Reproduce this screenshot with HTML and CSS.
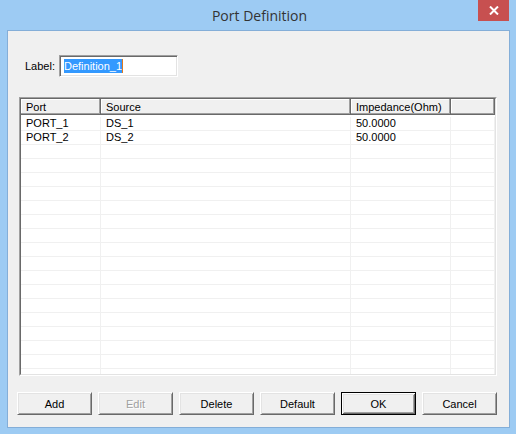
FILE: index.html
```html
<!DOCTYPE html>
<html lang="en">
<head>
  <meta charset="UTF-8"/>
  <title>Port Definition</title>
  <link rel="stylesheet" href="styles.css">
</head>
<body>

  <div class="window">
    <div class="titlebar">
      <span class="title">Port Definition</span>
      <button class="close" type="button" aria-label="Close">
        <svg width="10" height="9" viewBox="0 0 10 9">
          <path d="M1 0.5 L9 8.5 M9 0.5 L1 8.5" stroke="#fff" stroke-width="2" fill="none"/>
        </svg>
      </button>
    </div>

    <div class="client">
      <div class="label-row">
        <label>Label:</label>
        <div class="field"><span class="sel">Definition_1</span><span class="caret"></span></div>
      </div>

      <div class="list">
        <div class="list-inner">
          <div class="head">
            <div class="hcell">Port</div>
            <div class="hcell">Source</div>
            <div class="hcell">Impedance(Ohm)</div>
            <div class="hcell"></div>
          </div>
          <div class="rows">
            <div class="row"><div class="cell">PORT_1</div><div class="cell">DS_1</div><div class="cell">50.0000</div><div class="cell"></div></div>
            <div class="row"><div class="cell">PORT_2</div><div class="cell">DS_2</div><div class="cell">50.0000</div><div class="cell"></div></div>
            <div class="row"><div class="cell"></div><div class="cell"></div><div class="cell"></div><div class="cell"></div></div>
            <div class="row"><div class="cell"></div><div class="cell"></div><div class="cell"></div><div class="cell"></div></div>
            <div class="row"><div class="cell"></div><div class="cell"></div><div class="cell"></div><div class="cell"></div></div>
            <div class="row"><div class="cell"></div><div class="cell"></div><div class="cell"></div><div class="cell"></div></div>
            <div class="row"><div class="cell"></div><div class="cell"></div><div class="cell"></div><div class="cell"></div></div>
            <div class="row"><div class="cell"></div><div class="cell"></div><div class="cell"></div><div class="cell"></div></div>
            <div class="row"><div class="cell"></div><div class="cell"></div><div class="cell"></div><div class="cell"></div></div>
            <div class="row"><div class="cell"></div><div class="cell"></div><div class="cell"></div><div class="cell"></div></div>
            <div class="row"><div class="cell"></div><div class="cell"></div><div class="cell"></div><div class="cell"></div></div>
            <div class="row"><div class="cell"></div><div class="cell"></div><div class="cell"></div><div class="cell"></div></div>
            <div class="row"><div class="cell"></div><div class="cell"></div><div class="cell"></div><div class="cell"></div></div>
            <div class="row"><div class="cell"></div><div class="cell"></div><div class="cell"></div><div class="cell"></div></div>
            <div class="row"><div class="cell"></div><div class="cell"></div><div class="cell"></div><div class="cell"></div></div>
            <div class="row"><div class="cell"></div><div class="cell"></div><div class="cell"></div><div class="cell"></div></div>
            <div class="row"><div class="cell"></div><div class="cell"></div><div class="cell"></div><div class="cell"></div></div>
            <div class="row"><div class="cell"></div><div class="cell"></div><div class="cell"></div><div class="cell"></div></div>
            <div class="row"><div class="cell"></div><div class="cell"></div><div class="cell"></div><div class="cell"></div></div>
          </div>
        </div>
      </div>

      <div class="buttons">
        <button class="btn" type="button">Add</button>
        <button class="btn" type="button" disabled>Edit</button>
        <button class="btn" type="button">Delete</button>
        <button class="btn" type="button">Default</button>
        <button class="btn default" type="button">OK</button>
        <button class="btn" type="button">Cancel</button>
      </div>
    </div>
  </div>

</body>
</html>
```

FILE: styles.css
```css
body { margin:0; font-family:"Liberation Sans", Arial, sans-serif; font-size:11px; color:#000; }

.window {
  width:516px; height:434px; box-sizing:border-box; background:#9dcbf3;
  padding:0 6px 6px 7px; display:flex; flex-direction:column;
}
.titlebar {
  height:30px; flex:none; position:relative;
  display:flex; align-items:center; justify-content:center;
}
.title { font-family:"Open Sans", sans-serif; font-size:14px; color:#333; padding-left:2px; }
.close {
  position:absolute; top:0; right:1px; width:31px; height:21px;
  background:#c75050; border:none; padding:0;
  display:flex; align-items:center; justify-content:center;
}

.client {
  flex:1; background:#f0f0f0; border:1px solid #84aed8;
  display:flex; flex-direction:column;
}

.label-row { display:flex; align-items:center; margin-top:24px; padding-left:17px; }
.label-row label { width:34px; }
.field {
  width:119px; height:22px; box-sizing:border-box; background:#fff;
  border:1px solid; border-color:#a0a0a0 #fff #fff #a0a0a0;
  box-shadow:inset 1px 1px #696969, inset -1px -1px #e3e3e3;
  padding-left:4px; display:flex; align-items:center;
}
.sel { background:#3399ff; color:#fff; line-height:14px; }
.caret { width:1px; height:14px; background:#e07a20; }

.list {
  margin:20px 0 0 11px; width:478px; height:279px; box-sizing:border-box;
  border:1px solid; border-color:#a0a0a0 #fff #fff #a0a0a0;
}
.list-inner {
  height:100%; box-sizing:border-box; background:#fff; overflow:hidden;
  border:1px solid; border-color:#696969 #e3e3e3 #e3e3e3 #696969;
}
.head, .row { display:grid; grid-template-columns:80px 250px 100px 1fr; }
.hcell {
  height:16px; box-sizing:border-box; background:#f0f0f0; padding:2px 0 0 5px;
  border-right:1px solid #696969; border-bottom:1px solid #696969;
  box-shadow:inset -1px -1px #a0a0a0, inset 1px 1px #fff;
  white-space:nowrap;
}
.rows { padding-top:2px; }
.row { height:14px; box-sizing:border-box; border-bottom:1px solid #f0f0f0; }
.cell { border-right:1px solid #f0f0f0; padding:0 0 0 5px; line-height:13px; white-space:nowrap; }

.buttons { display:flex; gap:6px; margin-top:16px; padding-left:9px; }
.btn {
  width:75px; height:23px; padding:0; background:#f0f0f0;
  font-family:"Liberation Sans", Arial, sans-serif; font-size:11px; color:#000;
  border:1px solid; border-color:#fff #696969 #696969 #fff;
  box-shadow:inset 1px 1px #e3e3e3, inset -1px -1px #a0a0a0;
}
.btn:disabled { color:#a0a0a0; text-shadow:1px 1px #fff; }
.btn.default {
  border-color:#000;
  box-shadow:inset 1px 1px #fff, inset -1px -1px #696969, inset 2px 2px #e3e3e3, inset -2px -2px #a0a0a0;
}
```
